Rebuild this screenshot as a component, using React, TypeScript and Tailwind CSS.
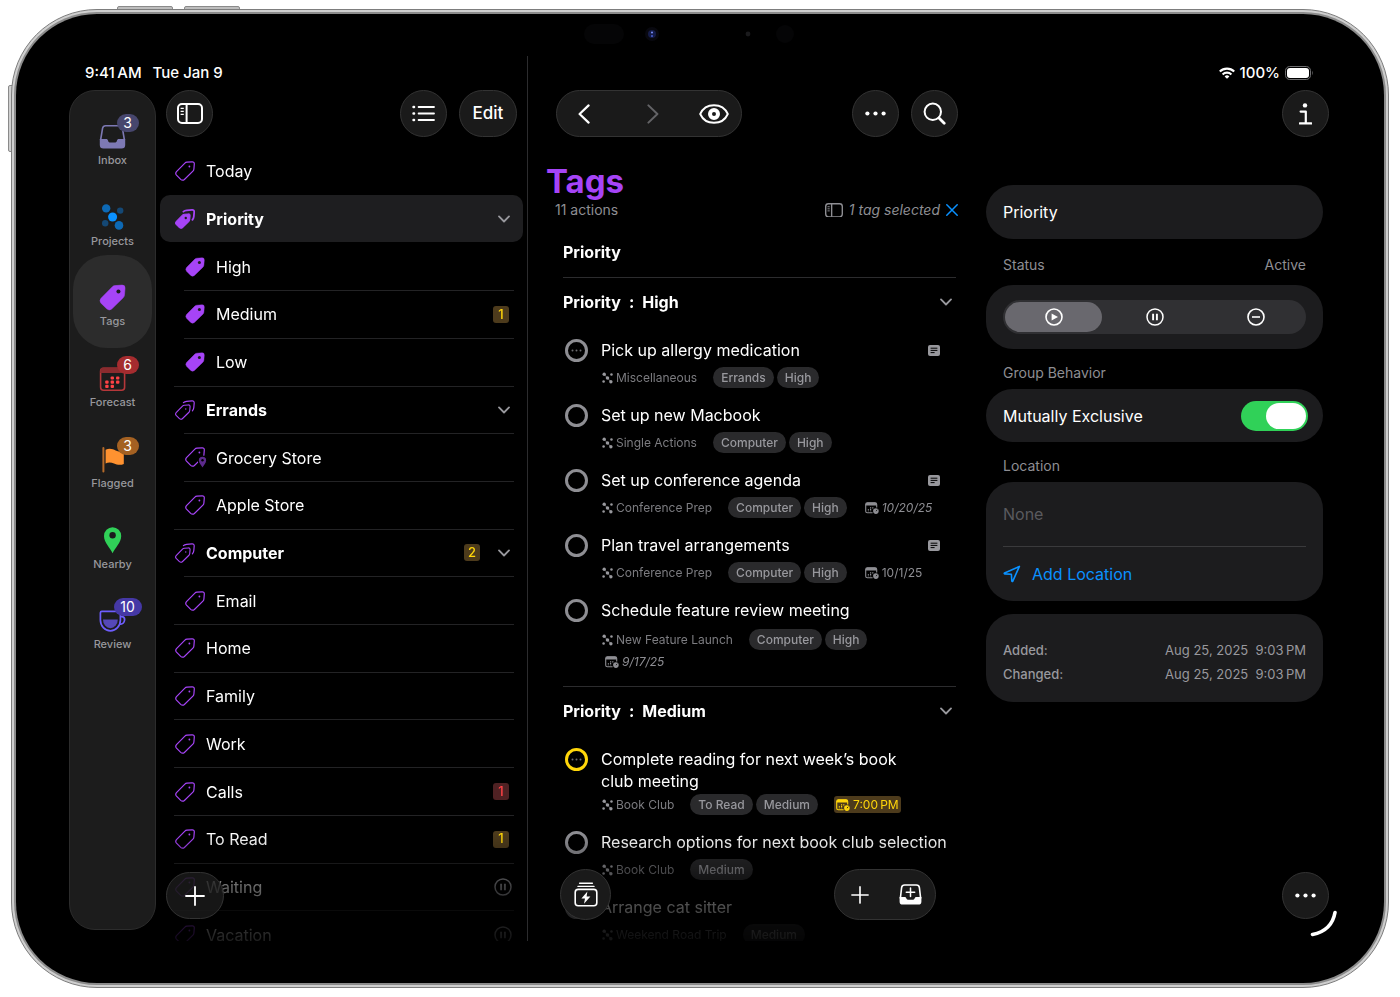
import type { ReactNode } from "react";

type Badge = { text: string; tone: "amber" | "red" };

type TagRow = {
  name: string;
  child?: boolean;
  group?: boolean;
  icon?: "outline" | "filled" | "pinned";
  selected?: boolean;
  badge?: Badge;
  paused?: boolean;
};

type Task = {
  title: string;
  project: string;
  tags: string[];
  note?: boolean;
  repeating?: boolean;
  dueSoon?: boolean;
  date?: string;
  planned?: boolean;
  dateBelow?: boolean;
};

const TAG_ROWS: TagRow[] = [
  { name: "Today" },
  { name: "Priority", group: true, icon: "filled", selected: true },
  { name: "High", child: true, icon: "filled" },
  { name: "Medium", child: true, icon: "filled", badge: { text: "1", tone: "amber" } },
  { name: "Low", child: true, icon: "filled" },
  { name: "Errands", group: true },
  { name: "Grocery Store", child: true, icon: "pinned" },
  { name: "Apple Store", child: true },
  { name: "Computer", group: true, badge: { text: "2", tone: "amber" } },
  { name: "Email", child: true },
  { name: "Home" },
  { name: "Family" },
  { name: "Work" },
  { name: "Calls", badge: { text: "1", tone: "red" } },
  { name: "To Read", badge: { text: "1", tone: "amber" } },
  { name: "Waiting", paused: true },
  { name: "Vacation", paused: true },
];

const HIGH_TASKS: Task[] = [
  { title: "Pick up allergy medication", project: "Miscellaneous", tags: ["Errands", "High"], note: true, repeating: true },
  { title: "Set up new Macbook", project: "Single Actions", tags: ["Computer", "High"] },
  { title: "Set up conference agenda", project: "Conference Prep", tags: ["Computer", "High"], note: true, date: "10/20/25", planned: true },
  { title: "Plan travel arrangements", project: "Conference Prep", tags: ["Computer", "High"], note: true, date: "10/1/25" },
  { title: "Schedule feature review meeting", project: "New Feature Launch", tags: ["Computer", "High"], date: "9/17/25", planned: true, dateBelow: true },
];

const MEDIUM_TASKS: Task[] = [
  { title: "Complete reading for next week’s book\nclub meeting", project: "Book Club", tags: ["To Read", "Medium"], repeating: true, dueSoon: true, date: "7:00\u2009PM" },
  { title: "Research options for next book club selection", project: "Book Club", tags: ["Medium"] },
  { title: "Arrange cat sitter", project: "Weekend Road Trip", tags: ["Medium"] },
];

const TAG_PATH =
  "M11.9 1.2 L17.1 .8 Q19.4 .7 19.3 3 L18.9 8 Q18.8 9.3 17.9 10.2 L9.4 18.5 Q7.5 20 5.7 18.4 L1.5 14.2 Q0 12.4 1.5 10.6 L9.9 2.1 Q10.7 1.3 11.9 1.2Z";

const FADE =
  "[mask-image:linear-gradient(to_top,rgba(0,0,0,0.12)_0px,rgba(0,0,0,0.3)_34px,rgba(0,0,0,0.4)_54px,rgba(0,0,0,0.65)_74px,#000_108px)]";

const ROUND = "flex items-center justify-center rounded-full border border-[#333333] text-white";

function TagIcon({ filled = false, size = 20 }: { filled?: boolean; size?: number }) {
  return (
    <svg width={size} height={size} viewBox="0 0 20 20" fill="none" aria-hidden="true">
      <path d={TAG_PATH} fill={filled ? "#a644f7" : "none"} stroke="#a644f7" strokeWidth={filled ? 0.4 : 1.2} />
      <circle cx="14.4" cy="5.5" r={filled ? 1.5 : 0.9} fill={filled ? "#1c1c1e" : "#a644f7"} />
    </svg>
  );
}

function TagGroupIcon({ filled = false }: { filled?: boolean }) {
  return (
    <svg width="20" height="20" viewBox="0 0 20 20" fill="none" stroke="#a644f7" aria-hidden="true">
      <g transform="translate(0 4.3) scale(.78)">
        <path d={TAG_PATH} fill={filled ? "#a644f7" : "none"} strokeWidth="1.4" />
        <circle cx="13.8" cy="6" r={filled ? 1.5 : 0.9} fill={filled ? "#1c1c1e" : "#a644f7"} stroke="none" />
      </g>
      <path
        d="M8.4 2.6 Q9.6 1.5 11.6 1.3 L17 .9 Q19.3 .8 19.2 3 L18.8 7.6 Q18.6 9.4 17.4 10.8"
        strokeWidth={filled ? 1.8 : 1.2}
        strokeLinecap="round"
      />
    </svg>
  );
}

function TagPinIcon() {
  return (
    <svg width="22" height="22" viewBox="0 0 22 22" fill="none" aria-hidden="true">
      <path d={TAG_PATH} stroke="#a644f7" strokeWidth="1.2" />
      <circle cx="14.4" cy="5.5" r=".9" fill="#a644f7" />
      <path d="M17.5 21.5 C15.5 18.3 13.2 16 13.2 13.4 a4.3 4.3 0 0 1 8.6 0 C21.8 16 19.5 18.3 17.5 21.5Z" fill="#5c2a8c" stroke="#000" strokeWidth="1.2" />
      <circle cx="17.5" cy="13.3" r="1.2" fill="#000" />
    </svg>
  );
}

function ChevronDown() {
  return (
    <svg width="12" height="8" viewBox="0 0 12 8" fill="none" stroke="#98989d" strokeWidth="1.8" strokeLinecap="round" strokeLinejoin="round" aria-hidden="true">
      <path d="M1 1.4 L6 6.5 L11 1.4" />
    </svg>
  );
}

function SidebarIcon({ width, stroke }: { width: number; stroke: string }) {
  return (
    <svg width={width} height={(width * 21) / 26} viewBox="0 0 26 21" fill="none" stroke={stroke} strokeWidth="2" aria-hidden="true">
      <rect x="1" y="1" width="24" height="19" rx="4" />
      <path d="M9.6 1 V20" />
      <path d="M3.6 5.4 H6.8 M3.6 8.4 H6.8 M3.6 11.4 H6.8" strokeWidth="1.4" />
    </svg>
  );
}

function ProjectDots() {
  return (
    <svg width="11" height="12" viewBox="0 0 26 26" fill="#98989d" aria-hidden="true">
      <path d="M6 5 L20 21" stroke="#98989d" strokeWidth="1.4" />
      <circle cx="13" cy="13" r="4.2" />
      <circle cx="5.2" cy="4" r="4" />
      <circle cx="21" cy="22" r="4" />
      <circle cx="22.4" cy="4.6" r="3" />
      <circle cx="3.8" cy="21.4" r="3" />
    </svg>
  );
}

function DateIcon({ color }: { color: string }) {
  return (
    <svg width="14" height="12" viewBox="0 0 14 12" fill="none" aria-hidden="true">
      <path d="M7.6 10.8 H2.4 Q.7 10.8 .7 9.2 V2.4 Q.7 .7 2.4 .7 H10 Q11.7 .7 11.7 2.4 V5.4" stroke={color} strokeWidth="1.1" />
      <path d="M.7 3.4 V2.2 Q.7 .6 2.4 .6 H10 Q11.7 .6 11.7 2.2 V3.4Z" fill={color} />
      <path d="M3.4 7.2 V9.2 M5.6 5.2 V9.2 M7.8 5.2 V6.8" stroke={color} strokeWidth="1.2" strokeDasharray="1.3 .5" />
      <circle cx="10.9" cy="9.1" r="2.8" fill={color} />
      <path d="M10.9 9.2 L12.3 7.8" stroke="#000" strokeWidth=".8" />
    </svg>
  );
}

function PauseCircle({ color = "white", size = 18 }: { color?: string; size?: number }) {
  return (
    <svg width={size} height={size} viewBox="0 0 18 18" fill="none" stroke={color} strokeWidth="1.5" aria-hidden="true">
      <circle cx="9" cy="9" r="8" />
      <path d="M7.1 5.8 V12.2 M10.9 5.8 V12.2" strokeWidth="1.9" />
    </svg>
  );
}

function Ellipsis() {
  return (
    <svg width="21" height="5" viewBox="0 0 21 5" fill="white" aria-hidden="true">
      <circle cx="2.4" cy="2.5" r="2.1" />
      <circle cx="10.5" cy="2.5" r="2.1" />
      <circle cx="18.6" cy="2.5" r="2.1" />
    </svg>
  );
}

function Plus({ size = 20 }: { size?: number }) {
  return (
    <svg width={size} height={size} viewBox="0 0 20 20" stroke="white" strokeWidth="1.8" strokeLinecap="round" aria-hidden="true">
      <path d="M10 1 V19 M1 10 H19" />
    </svg>
  );
}

function InboxIcon() {
  return (
    <svg width="28" height="28" viewBox="0 0 28 28" fill="none" aria-hidden="true">
      <path d="M1.6 18 L3.6 6.2 Q4.1 3.8 6.6 3.8 H20.4 Q22.9 3.8 23.4 6.2 L25.4 18" stroke="#7d79b4" strokeWidth="1.6" />
      <path d="M.8 17 H7 C8.4 17 8.8 17.6 9 18.6 C9.3 20.2 10 20.6 11.4 20.6 H15.6 C17 20.6 17.7 20.2 18 18.6 C18.2 17.6 18.6 17 20 17 H26.2 V23 Q26.2 26.6 22.6 26.6 H4.4 Q.8 26.6 .8 23Z" fill="#7d79b4" />
    </svg>
  );
}

function ProjectsIcon() {
  return (
    <svg width="28" height="28" viewBox="0 0 28 28" aria-hidden="true">
      <circle cx="7.2" cy="5.4" r="4.2" fill="#0d69b5" />
      <circle cx="20" cy="22.4" r="4.3" fill="#0d69b5" />
      <circle cx="21.2" cy="7.6" r="3.2" fill="#144875" />
      <circle cx="6.2" cy="20.2" r="3.2" fill="#144875" />
      <circle cx="13.6" cy="14" r="4.5" fill="#0a91ff" />
    </svg>
  );
}

function ForecastIcon() {
  const dots = [[13, 14], [18.4, 14], [7.6, 18.2], [13, 18.2], [18.4, 18.2], [7.6, 22.4], [13, 22.4]];
  return (
    <svg width="28" height="28" viewBox="0 0 28 28" fill="none" aria-hidden="true">
      <rect x="1.6" y="4.2" width="24" height="22" rx="3" stroke="#b5373a" strokeWidth="1.6" />
      <path d="M1.2 9 V7 Q1.2 3.6 4.6 3.6 H22.6 Q26 3.6 26 7 V9Z" fill="#8a2b2e" />
      {dots.map(([cx, cy]) => (
        <rect key={`${cx}-${cy}`} x={cx - 1.4} y={cy - 1.6} width="3.4" height="3.2" rx="1" fill="#ff4245" />
      ))}
    </svg>
  );
}

function FlagIcon() {
  return (
    <svg width="28" height="28" viewBox="0 0 28 28" aria-hidden="true">
      <rect x="3.4" y="2" width="2" height="25.4" rx="1" fill="#b56a2a" />
      <path d="M6.6 4.8 C10.6 2.8 14 4.2 16.6 5.4 C19.6 6.6 22 6.8 24.8 7.2 V19 C21.2 20.6 17.6 19.6 15 18.4 C12 17.2 9.2 17.2 6.6 18.4Z" fill="#ff9230" />
    </svg>
  );
}

function NearbyIcon() {
  return (
    <svg width="28" height="28" viewBox="0 0 28 28" aria-hidden="true">
      <path d="M13.6 27.2 C11.2 21.6 5 17 5 10 A8.6 8.8 0 0 1 22.2 10 C22.2 17 16 21.6 13.6 27.2Z" fill="#30d158" />
      <circle cx="13.6" cy="9.2" r="3.2" fill="#1c1c1e" />
    </svg>
  );
}

function ReviewIcon() {
  return (
    <svg width="28" height="28" viewBox="0 0 28 28" fill="none" stroke="#6d5dfc" strokeWidth="1.7" aria-hidden="true">
      <path d="M2.8 5.4 H20 Q21.4 5.4 21.4 6.8 V14 A10 10.8 0 0 1 1.4 14 V6.8 Q1.4 5.4 2.8 5.4Z" />
      <path d="M21.4 10.6 H23.2 Q25.8 11 25.6 14 Q25.2 18.2 20.4 18.4" />
      <path d="M4 13.4 H18.8 A7.4 8.8 0 0 1 4 13.4Z" fill="#5548b8" stroke="none" />
    </svg>
  );
}

const TABS: { label: string; icon: ReactNode; badge?: string; badgeColor?: string; active?: boolean }[] = [
  { label: "Inbox", icon: <InboxIcon />, badge: "3", badgeColor: "bg-[#47466d]" },
  { label: "Projects", icon: <ProjectsIcon /> },
  { label: "Tags", icon: <TagIcon filled size={27} />, active: true },
  { label: "Forecast", icon: <ForecastIcon />, badge: "6", badgeColor: "bg-[#a52c2f]" },
  { label: "Flagged", icon: <FlagIcon />, badge: "3", badgeColor: "bg-[#a46122]" },
  { label: "Nearby", icon: <NearbyIcon /> },
  { label: "Review", icon: <ReviewIcon />, badge: "10", badgeColor: "bg-[#4538a5]" },
];

function TabRail() {
  return (
    <nav className="mb-[11px] w-[87px] shrink-0 rounded-[26px] border border-[#2c2c2c] bg-[#1c1c1c] pt-[9px]">
      <div className="grid h-[565px] auto-rows-fr">
        {TABS.map((tab) => (
          <button key={tab.label} className="relative flex flex-col items-center pt-[22px]">
            {tab.active && <span className="absolute inset-x-[3px] -inset-y-[6px] rounded-[34px] bg-[#2c2c2c]" />}
            <span className="relative flex h-7 w-7 items-center justify-center">
              {tab.icon}
              {tab.badge && (
                <span
                  className={`absolute -top-2 flex h-[18px] items-center justify-center rounded-full text-sm text-white ${tab.badge.length > 1 ? "left-[15px] w-7" : "left-[18px] w-[22px]"} ${tab.badgeColor}`}
                >
                  {tab.badge}
                </span>
              )}
            </span>
            <span className="relative mt-[3px] text-[11px] leading-[14px] font-medium text-[#98989d]">{tab.label}</span>
          </button>
        ))}
      </div>
    </nav>
  );
}

function rowIcon(row: TagRow) {
  if (row.group) return <TagGroupIcon filled={row.icon === "filled"} />;
  if (row.icon === "pinned") return <TagPinIcon />;
  return <TagIcon filled={row.icon === "filled"} />;
}

function TagList() {
  return (
    <ul className="-mb-[17px] grid flex-1 auto-rows-fr">
      {TAG_ROWS.map((row, i) => {
        const noLine = i === 0 || row.selected || TAG_ROWS[i - 1].selected;
        return (
          <li key={row.name} className={`rounded-[10px] pr-[9px] ${row.child ? "pl-6" : "pl-[14px]"} ${row.selected ? "bg-[#1e1e20]" : ""}`}>
            <button className={`flex h-full w-full items-center border-t text-left ${noLine ? "border-transparent" : "border-[#232325]"}`}>
              <span className="flex w-8 shrink-0 items-center pl-px">{rowIcon(row)}</span>
              <span className={`flex-1 text-base text-white ${row.group ? "font-bold" : ""}`}>{row.name}</span>
              {row.badge && (
                <span
                  className={`flex h-[17px] w-4 items-center justify-center rounded-[3px] text-[13px] font-medium ${row.group ? "mr-[18px]" : "mr-[5px]"} ${row.badge.tone === "amber" ? "bg-[#4d3b1c] text-[#ffd60a]" : "bg-[#4f2123] text-[#ff4245]"}`}
                >
                  {row.badge.text}
                </span>
              )}
              {row.group && <span className="mr-1"><ChevronDown /></span>}
              {row.paused && <span className="mr-[2px]"><PauseCircle color="#98989d" /></span>}
            </button>
          </li>
        );
      })}
    </ul>
  );
}

function DateLabel({ task }: { task: Task }) {
  if (task.dueSoon) {
    return (
      <span className="flex h-[17px] items-center gap-[3px] rounded-[3px] bg-[#4d3b1c] px-[2px] text-xs text-[#ffd60a]">
        <DateIcon color="#ffd60a" />
        {task.date}
      </span>
    );
  }
  return (
    <span className={`flex h-4 items-center gap-[3px] text-xs text-[#8e8e93] ${task.planned ? "italic" : ""}`}>
      <DateIcon color="#8e8e93" />
      {task.date}
    </span>
  );
}

function TaskItem({ task }: { task: Task }) {
  return (
    <li className="flex pb-4 pl-[2px]">
      <span className="relative mr-[14px] h-[22px] w-[22px] shrink-0">
        <input
          type="checkbox"
          aria-label={task.title}
          className={`block h-[23px] w-[23px] appearance-none rounded-full border-[3px] ${task.dueSoon ? "border-[#ffd60a]" : "border-[#8e8e93]"}`}
        />
        {task.repeating && (
          <svg width="11" height="3" viewBox="0 0 11 3" fill="#6c6c70" className="pointer-events-none absolute top-[10px] left-[6px]" aria-hidden="true">
            <circle cx="1.5" cy="1.5" r="1" />
            <circle cx="5.5" cy="1.5" r="1" />
            <circle cx="9.5" cy="1.5" r="1" />
          </svg>
        )}
      </span>
      <div className="min-w-0 flex-1">
        <div className="flex items-center justify-between pr-4">
          <p className="text-base leading-[22px] whitespace-pre text-white">{task.title}</p>
          {task.note && (
            <svg width="12" height="11" viewBox="0 0 12 11" aria-hidden="true">
              <rect width="12" height="11" rx="2" fill="#98989d" />
              <path d="M2.6 3.2 H9.4 M2.6 5.4 H9.4 M2.6 7.6 H6.6" stroke="#000" strokeWidth="1" />
            </svg>
          )}
        </div>
        <div className={`flex items-center pl-px ${task.dueSoon ? "mt-[2px]" : task.dateBelow ? "mt-2" : "mt-[6px]"}`}>
          <ProjectDots />
          <span className="ml-[3px] text-xs text-[#7c7c80]">{task.project}</span>
          <span className="ml-4 flex gap-[3px]">
            {task.tags.map((t) => (
              <span key={t} className="h-[21px] rounded-full bg-[#2a2a2c] px-2 text-xs leading-[21px] font-medium text-[#98989d]">{t}</span>
            ))}
          </span>
          {task.date && !task.dateBelow && <span className={task.dueSoon ? "ml-4" : "ml-[18px]"}><DateLabel task={task} /></span>}
        </div>
        {task.dateBelow && <div className="mt-1 ml-1"><DateLabel task={task} /></div>}
      </div>
    </li>
  );
}

function TaskGroup({ name, tasks }: { name: string; tasks: Task[] }) {
  return (
    <section className="border-t border-[#2c2c2e]">
      <h2 className="flex h-12 items-center gap-2 pr-1 text-base font-bold text-white">
        <span>Priority</span>
        <span>:</span>
        <span className="mr-auto">{name}</span>
        <ChevronDown />
      </h2>
      <ul className="pt-[13px]">
        {tasks.map((t) => (
          <TaskItem key={t.title} task={t} />
        ))}
      </ul>
    </section>
  );
}

function Sidebar() {
  return (
    <section className="relative flex w-[512px] shrink-0 flex-col border-r border-[#2c2c2e]">
      <div className="flex h-[34px] items-center gap-[11px] pl-[69px] text-[15px] font-medium text-white">
        <span>{"9:41\u2009AM"}</span>
        <span>Tue Jan 9</span>
      </div>
      <div className="flex min-h-0 flex-1 pl-[53px]">
        <TabRail />
        <div className="relative flex flex-1 flex-col pr-1 pl-1">
          <div className="flex gap-3 pr-[6px] pl-[6px]">
            <button aria-label="Toggle sidebar" className={`mr-auto h-[47px] w-[47px] bg-[#1a1a1a] ${ROUND}`}>
              <SidebarIcon width={26} stroke="white" />
            </button>
            <button aria-label="View options" className={`h-[47px] w-[47px] bg-[#1a1a1a] ${ROUND}`}>
              <svg width="23" height="17" viewBox="0 0 23 17" fill="none" stroke="white" strokeWidth="1.8" strokeLinecap="round" aria-hidden="true">
                <path d="M6.6 2 H22 M6.6 8.5 H22 M6.6 15 H22" />
                <path d="M1.5 2 h.6 M1.5 8.5 h.6 M1.5 15 h.6" strokeWidth="2.4" />
              </svg>
            </button>
            <button className={`h-[47px] w-[58px] bg-[#1a1a1a] text-[17px] font-medium ${ROUND}`}>Edit</button>
          </div>
          <div className={`flex min-h-0 flex-1 flex-col overflow-hidden pt-[10px] ${FADE}`}>
            <TagList />
          </div>
          <button aria-label="Add tag" className={`absolute bottom-[22px] left-[10px] h-[47px] w-[58px] bg-[#1e1e1e]/75 ${ROUND}`}>
            <Plus />
          </button>
        </div>
      </div>
    </section>
  );
}

function Outline() {
  return (
    <main className="relative flex min-w-0 flex-1 flex-col pt-[34px] pr-7 pl-[18px]">
      <div className="flex gap-3 pl-[10px]">
        <div className={`mr-auto h-[47px] w-[186px] bg-[#1a1a1a] ${ROUND}`}>
          <button aria-label="Back" className="flex flex-1 justify-center pr-4">
            <svg width="12" height="20" viewBox="0 0 12 20" fill="none" stroke="white" strokeWidth="2.2" strokeLinecap="round" strokeLinejoin="round" aria-hidden="true">
              <path d="M10.6 1.4 L1.6 10 L10.6 18.6" />
            </svg>
          </button>
          <button aria-label="Forward" className="flex flex-1 justify-center pr-2">
            <svg width="12" height="20" viewBox="0 0 12 20" fill="none" stroke="#636366" strokeWidth="2" strokeLinecap="round" strokeLinejoin="round" aria-hidden="true">
              <path d="M1.4 1.4 L10.4 10 L1.4 18.6" />
            </svg>
          </button>
          <button aria-label="View options" className="flex flex-1 justify-center">
            <svg width="30" height="20" viewBox="0 0 30 20" fill="none" stroke="white" strokeWidth="1.9" aria-hidden="true">
              <path d="M1.2 10 C3.6 4.6 9 1.2 15 1.2 S26.4 4.6 28.8 10 C26.4 15.4 21 18.8 15 18.8 S3.6 15.4 1.2 10Z" />
              <circle cx="15" cy="10" r="4" strokeWidth="4" />
            </svg>
          </button>
        </div>
        <button aria-label="More" className={`h-[47px] w-[47px] bg-[#1a1a1a] ${ROUND}`}>
          <Ellipsis />
        </button>
        <button aria-label="Search" className={`h-[47px] w-[47px] bg-[#1a1a1a] ${ROUND}`}>
          <svg width="23" height="23" viewBox="0 0 23 23" fill="none" stroke="white" strokeLinecap="round" aria-hidden="true">
            <circle cx="9.8" cy="9.8" r="8.2" strokeWidth="2" />
            <path d="M16 16 L21.2 21.2" strokeWidth="2.8" />
          </svg>
        </button>
      </div>
      <h1 className="mt-[26px] text-[33px] leading-[37px] font-bold text-[#a644f7]">Tags</h1>
      <div className="flex h-5 items-center pl-[9px] text-sm text-[#8e8e93]">
        <span className="mr-auto">11 actions</span>
        <SidebarIcon width={18} stroke="#8e8e93" />
        <span className="mr-[6px] ml-[6px] italic">1 tag selected</span>
        <button aria-label="Clear selection">
          <svg width="12" height="12" viewBox="0 0 12 12" stroke="#0a91ff" strokeWidth="1.5" strokeLinecap="round" aria-hidden="true">
            <path d="M.8 .8 L11.2 11.2 M11.2 .8 L.8 11.2" />
          </svg>
        </button>
      </div>
      <div className={`min-h-0 flex-1 overflow-hidden pt-[7px] pr-[2px] pl-[17px] ${FADE}`}>
        <h2 className="flex h-[50px] items-center text-base font-bold text-white">Priority</h2>
        <TaskGroup name="High" tasks={HIGH_TASKS} />
        <TaskGroup name="Medium" tasks={MEDIUM_TASKS} />
      </div>
      <button aria-label="Quick entry" className={`absolute bottom-[21px] left-8 h-[51px] w-[51px] bg-[#1a1a1a] ${ROUND}`}>
        <svg width="24" height="25" viewBox="0 0 24 25" fill="none" stroke="white" strokeWidth="1.6" strokeLinecap="round" aria-hidden="true">
          <path d="M5.6 1.2 H18.4 M4 4.4 H20" strokeWidth="1.4" />
          <rect x="1.2" y="7.4" width="21.6" height="16.4" rx="3" />
          <path d="M13.4 9.6 L7.4 16.4 H11 L10 21.8 L16.4 14.6 H12.6Z" fill="white" stroke="none" />
        </svg>
      </button>
      <div className={`absolute right-[50px] bottom-[21px] h-[51px] w-[102px] bg-[#1a1a1a] ${ROUND}`}>
        <button aria-label="New action" className="flex flex-1 justify-center"><Plus size={18} /></button>
        <button aria-label="New inbox item" className="flex flex-1 justify-center">
          <svg width="23" height="21" viewBox="0 0 23 21" fill="none" stroke="white" strokeLinecap="round" aria-hidden="true">
            <path d="M1.4 14 L2.6 3.6 Q3 1 5.6 1 H17.4 Q20 1 20.4 3.6 L21.6 14" strokeWidth="1.6" />
            <path d="M.6 13 H5.6 Q7 13 7.4 14.4 Q7.8 15.8 9.2 15.8 H13.8 Q15.2 15.8 15.6 14.4 Q16 13 17.4 13 H22.4 V17.4 Q22.4 20.6 19.2 20.6 H3.8 Q.6 20.6 .6 17.4Z" fill="white" stroke="none" />
            <path d="M11.5 4 V12.4 M7.3 8.2 H15.7" strokeWidth="1.5" />
          </svg>
        </button>
      </div>
    </main>
  );
}

function PlayCircle() {
  return (
    <svg width="18" height="18" viewBox="0 0 18 18" fill="none" aria-hidden="true">
      <circle cx="9" cy="9" r="8" stroke="white" strokeWidth="1.6" />
      <path d="M6.6 5.4 L13 9 L6.6 12.6Z" fill="white" />
    </svg>
  );
}

function MinusCircle() {
  return (
    <svg width="18" height="18" viewBox="0 0 18 18" fill="none" stroke="white" strokeWidth="1.6" aria-hidden="true">
      <circle cx="9" cy="9" r="8" />
      <path d="M5 9 H13" />
    </svg>
  );
}

const STATUSES = [
  { value: "active", icon: <PlayCircle /> },
  { value: "on-hold", icon: <PauseCircle /> },
  { value: "dropped", icon: <MinusCircle /> },
];

function Inspector() {
  const card = "rounded-[27px] bg-[#1c1c1e] px-[17px]";
  return (
    <aside className="relative flex w-[398px] shrink-0 flex-col pr-[61px] text-base text-white">
      <div className="flex h-[34px] items-center justify-end gap-[5px] pr-[10px] text-[15px] font-medium">
        <svg width="16" height="12" viewBox="0 0 16 12" fill="none" stroke="white" strokeWidth="2.1" aria-hidden="true">
          <path d="M.8 4.6 A10.3 10.3 0 0 1 15.2 4.6" />
          <path d="M3.6 7.4 A6.3 6.3 0 0 1 12.4 7.4" />
          <path d="M8 11.8 L5.6 9.4 A3.4 3.4 0 0 1 10.4 9.4Z" fill="white" stroke="none" />
        </svg>
        <span>100%</span>
        <svg width="28" height="14" viewBox="0 0 28 14" fill="none" aria-hidden="true">
          <rect x=".5" y=".5" width="25" height="13" rx="4.2" stroke="#6e6e70" />
          <rect x="2" y="2" width="22" height="10" rx="3" fill="white" />
          <path d="M27 4.8 Q28.4 7 27 9.2Z" fill="#6e6e70" />
        </svg>
      </div>
      <div className="-mr-[6px] flex justify-end">
        <button aria-label="Inspector" className={`h-[47px] w-[47px] bg-[#1a1a1a] ${ROUND}`}>
          <svg width="13" height="22" viewBox="0 0 13 22" fill="none" stroke="white" strokeWidth="2.2" aria-hidden="true">
            <circle cx="6" cy="2.4" r="2.2" fill="white" stroke="none" />
            <path d="M1.6 8.6 H6.8 V20.4 M.8 20.4 H12.4" strokeLinecap="round" strokeLinejoin="round" />
          </svg>
        </button>
      </div>
      <input aria-label="Tag name" defaultValue="Priority" className={`mt-12 h-[54px] w-full pb-px ${card}`} />
      <div className="flex h-[46px] items-center justify-between px-[17px] pt-[6px] text-sm text-[#8e8e93]">
        <span>Status</span>
        <span>Active</span>
      </div>
      <div role="radiogroup" aria-label="Status" className={`flex h-16 items-center ${card}`}>
        <div className="flex h-[34px] w-full rounded-full bg-[#303033]">
          {STATUSES.map((s, i) => (
            <label key={s.value} className="flex flex-1 p-[2px]">
              <input type="radio" name="status" aria-label={s.value} defaultChecked={i === 0} className="peer sr-only" />
              <span className="flex flex-1 items-center justify-center rounded-full peer-checked:bg-[#69686e]">{s.icon}</span>
            </label>
          ))}
        </div>
      </div>
      <div className="flex h-10 items-center px-[17px] pt-2 text-sm text-[#8e8e93]">Group Behavior</div>
      <label className={`flex h-[53px] items-center justify-between ${card}`}>
        Mutually Exclusive
        <input
          type="checkbox"
          role="switch"
          defaultChecked
          className="-mr-[2px] flex h-[30px] w-[67px] appearance-none items-center justify-end rounded-full bg-[#30d158] px-[2px] before:h-[26px] before:w-10 before:rounded-full before:bg-white"
        />
      </label>
      <div className="flex h-10 items-center px-[17px] pt-2 text-sm text-[#8e8e93]">Location</div>
      <div className={`h-[119px] ${card}`}>
        <div className="flex h-[65px] items-center border-b border-[#3a3a3c] text-[#5a5a5e]">None</div>
        <button className="flex h-[54px] w-full items-center gap-[11px] text-[#0a91ff]">
          <svg width="18" height="18" viewBox="0 0 18 18" fill="none" stroke="#0a91ff" strokeWidth="1.6" strokeLinejoin="round" aria-hidden="true">
            <path d="M16.4 1.4 L1.6 8 Q.8 8.6 1.8 8.9 L8.4 9.2 L8.8 16 Q9.2 17 9.8 16.2Z" />
          </svg>
          Add Location
        </button>
      </div>
      <dl className={`mt-[13px] flex h-[88px] flex-col justify-center pt-[8px] text-[13px] leading-6 text-[#98989d] ${card}`}>
        <div className="flex justify-between">
          <dt className="font-medium">Added:</dt>
          <dd className="whitespace-pre">{"Aug 25, 2025  9:03\u2009PM"}</dd>
        </div>
        <div className="flex justify-between">
          <dt className="font-medium">Changed:</dt>
          <dd className="whitespace-pre">{"Aug 25, 2025  9:03\u2009PM"}</dd>
        </div>
      </dl>
      <button aria-label="More actions" className={`absolute right-[55px] bottom-[22px] h-[47px] w-[47px] bg-[#1a1a1a] ${ROUND}`}>
        <Ellipsis />
      </button>
      <svg width="27" height="27" viewBox="0 0 27 27" fill="none" className="absolute right-[47px] bottom-1" aria-hidden="true">
        <path d="M25 2.5 C23 14 15 22 2.5 24.5" stroke="white" strokeWidth="3.6" strokeLinecap="round" />
      </svg>
    </aside>
  );
}

export default function App() {
  return (
    <div className="h-screen min-h-[860px] bg-white px-[11px] py-[9px] font-['Inter',sans-serif]">
      <div className="relative h-full">
        <span className="absolute -top-[3px] left-[106px] h-2 w-14 rounded-t-[2px] border border-[#8a8a8a] bg-[#bdbdbd]" />
        <span className="absolute -top-[3px] left-[173px] h-2 w-14 rounded-t-[2px] border border-[#8a8a8a] bg-[#bdbdbd]" />
        <span className="absolute top-[76px] -left-[3px] h-[67px] w-2 rounded-l-[2px] border border-[#8a8a8a] bg-[#d0d0d0]" />
        <div className="relative h-full rounded-[86px] border border-[#7d7d7d] bg-[#cfcfcf] p-[2px]">
          <div className="h-full rounded-[83px] bg-[#8c8c8c] p-[2px]">
            <div className="relative flex h-full rounded-[81px] bg-black py-[42px]">
              <svg width="210" height="24" viewBox="0 0 210 24" className="absolute top-2 left-1/2 -ml-[116px]" aria-hidden="true">
                <rect x="0" y="2" width="40" height="20" rx="10" fill="#050506" />
                <circle cx="68" cy="12" r="7" fill="#08080f" />
                <circle cx="68" cy="12" r="4" fill="#151c48" />
                <circle cx="68" cy="10.6" r="1" fill="#7d92ff" />
                <circle cx="68" cy="14" r="1" fill="#4a5fd0" />
                <circle cx="164" cy="12" r="2.4" fill="#1a1a1c" />
                <circle cx="201" cy="12" r="9" fill="#050506" />
              </svg>
              <Sidebar />
              <Outline />
              <Inspector />
            </div>
          </div>
        </div>
      </div>
    </div>
  );
}
